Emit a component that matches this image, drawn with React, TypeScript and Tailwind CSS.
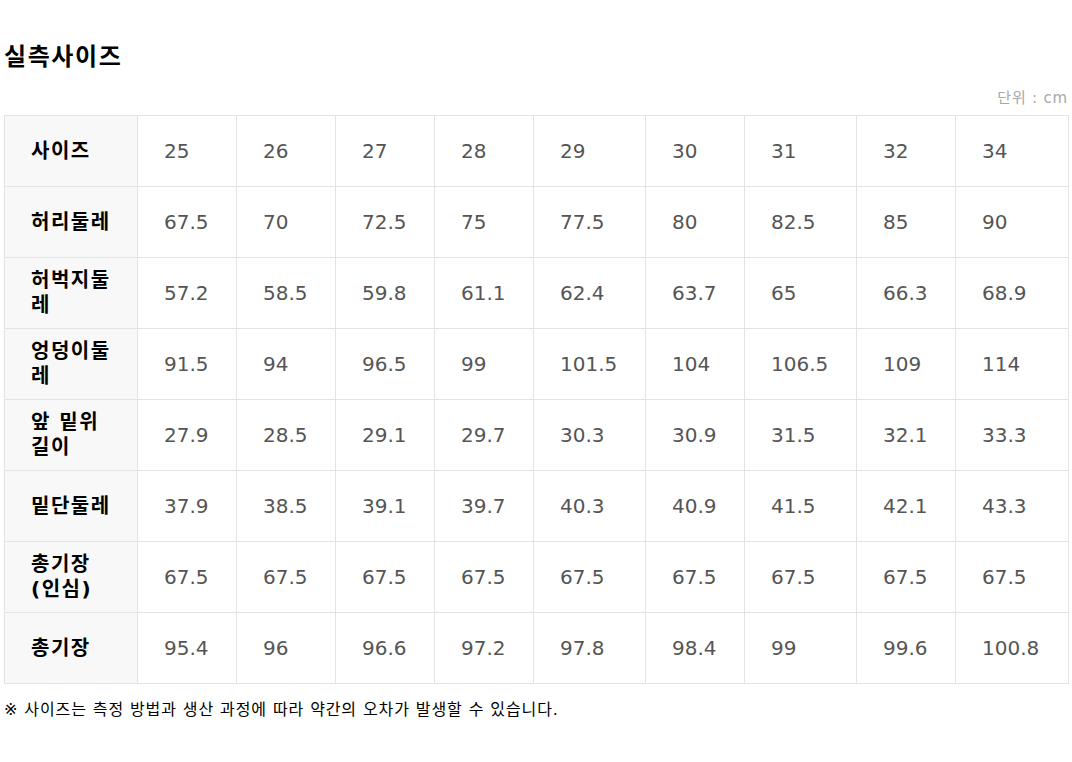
const sizes = ["25", "26", "27", "28", "29", "30", "31", "32", "34"];

const rows: { label: string; values: string[] }[] = [
  { label: "허리둘레", values: ["67.5", "70", "72.5", "75", "77.5", "80", "82.5", "85", "90"] },
  { label: "허벅지둘레", values: ["57.2", "58.5", "59.8", "61.1", "62.4", "63.7", "65", "66.3", "68.9"] },
  { label: "엉덩이둘레", values: ["91.5", "94", "96.5", "99", "101.5", "104", "106.5", "109", "114"] },
  { label: "앞 밑위 길이", values: ["27.9", "28.5", "29.1", "29.7", "30.3", "30.9", "31.5", "32.1", "33.3"] },
  { label: "밑단둘레", values: ["37.9", "38.5", "39.1", "39.7", "40.3", "40.9", "41.5", "42.1", "43.3"] },
  { label: "총기장 (인심)", values: ["67.5", "67.5", "67.5", "67.5", "67.5", "67.5", "67.5", "67.5", "67.5"] },
  { label: "총기장", values: ["95.4", "96", "96.6", "97.2", "97.8", "98.4", "99", "99.6", "100.8"] },
];

// 값이 긴 열(29, 31, 34)은 조금 더 넓게
const colWidths = ["w-[133px]", "w-[99px]", "w-[99px]", "w-[99px]", "w-[99px]", "w-[112px]", "w-[99px]", "w-[112px]", "w-[99px]", "w-[113px]"];

export default function App() {
  return (
    <div className="bg-white min-h-[762px] px-[4px] pt-[41px] font-['DejaVu_Sans','Noto_Sans_CJK_KR',sans-serif] text-black">
      <h2 className="text-[24px] leading-[32px] font-bold tracking-[1.6px]">실측사이즈</h2>

      <p className="mt-[15px] text-right text-[15px] leading-[20px] tracking-[0.8px] text-[#a8a8a8]">단위 : cm</p>

      <table className="mt-[7px] w-full table-fixed border-collapse border border-[#e3e3e3]">
        <colgroup>
          {colWidths.map((w, i) => (
            <col key={i} className={w} />
          ))}
        </colgroup>
        <tbody>
          <tr className="h-[71px]">
            <th className="border border-[#e3e3e3] bg-[#f8f8f8] pl-[26px] pr-[22px] text-left text-[20px] leading-[25px] font-bold tracking-[1.5px]">
              사이즈
            </th>
            {sizes.map((s) => (
              <td key={s} className="border border-[#e3e3e3] pl-[26px] text-left text-[20px] leading-[25px] text-[#555555]">
                {s}
              </td>
            ))}
          </tr>
          {rows.map((row) => (
            <tr key={row.label} className="h-[71px]">
              <th className="border border-[#e3e3e3] bg-[#f8f8f8] pl-[26px] pr-[22px] text-left text-[20px] leading-[25px] font-bold tracking-[1.5px]">
                {row.label}
              </th>
              {row.values.map((v, i) => (
                <td key={i} className="border border-[#e3e3e3] pl-[26px] text-left text-[20px] leading-[25px] text-[#555555]">
                  {v}
                </td>
              ))}
            </tr>
          ))}
        </tbody>
      </table>

      <p className="mt-[16px] text-[16px] leading-[20px] tracking-[0.9px]">
        ※ 사이즈는 측정 방법과 생산 과정에 따라 약간의 오차가 발생할 수 있습니다.
      </p>
    </div>
  );
}
